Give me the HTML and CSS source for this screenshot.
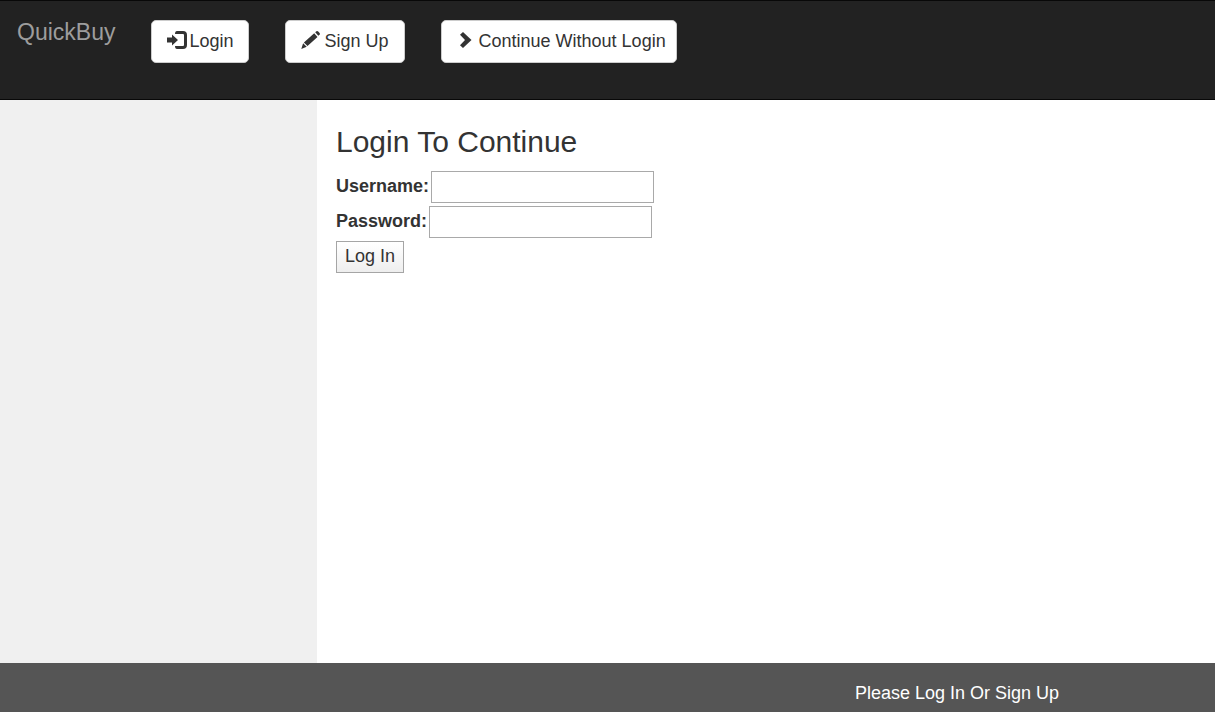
FILE: index.html
```html
<!DOCTYPE html>
<html lang="en">
<head>
<meta charset="utf-8">
<title>QuickBuy</title>
<link rel="stylesheet" href="styles.css">
</head>
<body>
<nav class="navbar">
  <a class="brand" href="#">QuickBuy</a>
  <button type="button" class="btn">
    <svg class="icon" viewBox="0 0 20 18" aria-hidden="true"><path d="M0 6.500h5V3.500L11 9l-6 5.500v-3H0zM10 0h6q4 0 4 4v10q0 4-4 4h-6q-2 0-2-3h8q1 0 1-1V4q0-1-1-1H8q0-3 2-3z"/></svg>
    <span>Login</span>
  </button>
  <button type="button" class="btn btn-spaced">
    <svg class="icon" viewBox="0 0 20 18" aria-hidden="true"><path d="M14.200 1.300L15.400.3q1-.6 1.800.2l1.400 1.600q.7.900-.1 1.700l-1.200 1zM13.200 2.200l3.300 3.700L6.500 15 2.900 11.400zM2.100 12.300l3.600 3.500L.3 18z"/></svg>
    <span>Sign Up</span>
  </button>
  <button type="button" class="btn btn-spaced btn-wide">
    <svg class="icon" viewBox="0 0 20 18" aria-hidden="true"><path d="M4 3.800L7 1l8.500 8L7 17l-3-2.800L9 9z"/></svg>
    <span>Continue Without Login</span>
  </button>
</nav>
<div class="page">
  <aside class="sidebar"></aside>
  <main class="content">
    <h1 class="title">Login To Continue</h1>
    <form class="login-form">
      <div class="field">
        <label for="username">Username:</label>
        <input class="text-input" id="username" name="username" type="text">
      </div>
      <div class="field">
        <label for="password">Password:</label>
        <input class="text-input" id="password" name="password" type="password">
      </div>
      <button type="submit" class="submit">Log In</button>
    </form>
  </main>
</div>
<footer class="footer"><p class="footer-text">Please Log In Or Sign Up</p></footer>
</body>
</html>
```
FILE: styles.css
```css
* {
  box-sizing: border-box;
}

body {
  display: flex;
  flex-direction: column;
  min-height: 100vh;
  margin: 0;
  background: #fff;
  color: #333;
  font: 18px/25px "Liberation Sans", Arial, sans-serif;
}

.navbar {
  display: flex;
  align-items: flex-start;
  gap: 36px;
  padding: 19px 17px 36px;
  border: solid #080808;
  border-width: 1px 0;
  background: #222;
}

.brand {
  color: #9d9d9d;
  font-size: 23px;
  text-decoration: none;
}

.btn {
  display: flex;
  align-items: center;
  gap: 2px;
  padding: 8px 15px;
  border: 1px solid #ccc;
  border-radius: 5px;
  background: #fff;
  color: #333;
  font: inherit;
}

.btn-spaced {
  gap: 3px;
}

.btn-wide {
  padding: 8px 10px 8px 14px;
}

.icon {
  width: 20px;
  height: 18px;
  margin-bottom: 3px;
  fill: #333;
}

.page {
  display: flex;
  flex: 1;
}

.sidebar {
  flex: 0 0 317px;
  background: #f0f0f0;
}

.content {
  flex: 1;
  padding: 25px 19px;
}

.title {
  margin: 0 0 13px;
  font-size: 30px;
  font-weight: 400;
  line-height: 33px;
}

.login-form {
  display: flex;
  flex-direction: column;
  align-items: flex-start;
  gap: 3px;
}

.field {
  display: flex;
  gap: 2px;
  font-weight: 700;
}

.field label {
  line-height: 30px;
}

.text-input {
  width: 223px;
  height: 32px;
  padding: 2px;
  border: 1px solid #a9a9a9;
  background: #fff;
  color: #333;
  font: inherit;
}

.submit {
  height: 32px;
  padding: 0 8px 2px;
  border: 1px solid #a5a5a5;
  background: linear-gradient(#fff, #eee);
  color: #333;
  font: inherit;
}

.footer {
  display: flex;
  justify-content: flex-end;
  padding: 18px 156px 6px;
  background: #555;
  color: #fff;
}

.footer-text {
  margin: 0;
}
```
